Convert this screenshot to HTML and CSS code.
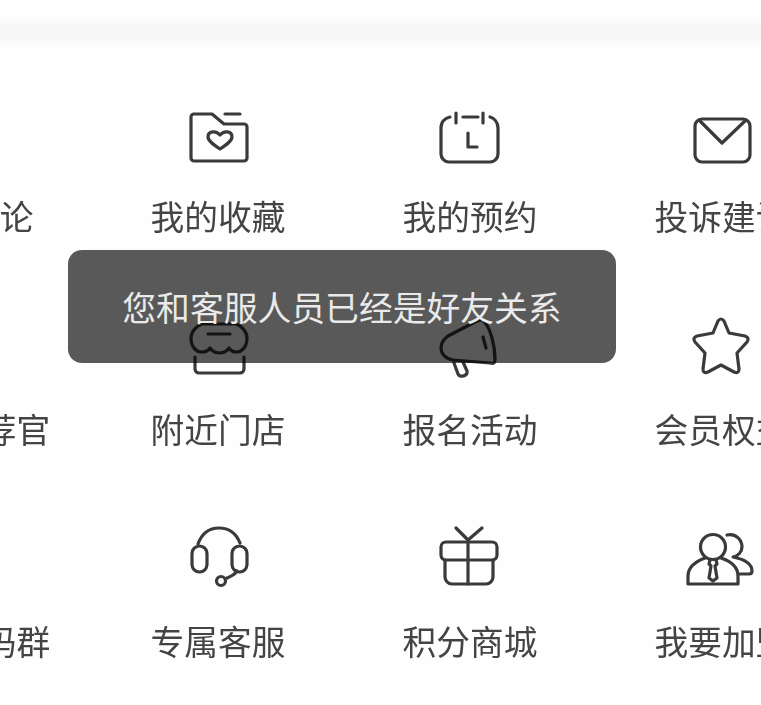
FILE: index.html
```html
<!DOCTYPE html>
<html lang="zh-CN">
<head>
    <meta charset="UTF-8">
    <meta name="viewport" content="width=device-width, initial-scale=1.0">
    <title>个人中心</title>
    <link rel="stylesheet" href="styles.css">
</head>
<body>
    <div class="top-band"></div>

    <div class="menu">
        <div class="row row-1">
            <div class="item">
                <div class="icon"></div>
                <div class="label">我的评论</div>
            </div>
            <div class="item">
                <svg class="icon" viewBox="0 0 64 64">
                    <path d="M5 11a3 3 0 0 1 3-3h18l12 10h20a3 3 0 0 1 3 3v31a3 3 0 0 1-3 3H8a3 3 0 0 1-3-3z"/>
                    <path d="M39 8h15"/>
                    <path d="M34 43c-6-4-12-8-12-12 0-6 8-7 12-2 4-5 12-4 12 2 0 4-6 8-12 12z"/>
                </svg>
                <div class="label">我的收藏</div>
            </div>
            <div class="item">
                <svg class="icon" viewBox="0 0 64 64">
                    <path d="M12 11C7 12 3 16 3 22v26a8 8 0 0 0 8 8h41a8 8 0 0 0 8-8V22c0-6-4-10-8-11"/>
                    <path d="M18 7v10M45 7v10M25 11h15"/>
                    <path d="M30 27v14h9"/>
                </svg>
                <div class="label">我的预约</div>
            </div>
            <div class="item">
                <svg class="icon" viewBox="0 0 64 64">
                    <rect x="5" y="13" width="55" height="43" rx="7"/>
                    <path d="M9 14l23 23 24-23"/>
                </svg>
                <div class="label">投诉建议</div>
            </div>
        </div>

        <div class="row row-2">
            <div class="item">
                <div class="icon"></div>
                <div class="label">我的推荐官</div>
            </div>
            <div class="item">
                <svg class="icon" viewBox="0 0 64 64">
                    <path d="M16 7H50C56 9 61 15 61 21C61 30 56 35 50 35C47 35 45 34 43 31C41 34 38 36 33.5 36C29 36 26 34 24 31C22 34 20 35 16 35C10 35 5 30 5 21C5 15 10 9 16 7z"/>
                    <path d="M22 17h22"/>
                    <path d="M9 40v12a4 4 0 0 0 4 4h41a4 4 0 0 0 4-4V40"/>
                </svg>
                <div class="label">附近门店</div>
            </div>
            <div class="item">
                <svg class="icon" viewBox="0 0 64 64">
                    <path d="M44 3C52 8 57 28 57 43c0 3-2 4-5 3L15 43C8 42 3 37 3 31c0-5 3-9 7-12L39 4c2-1 3-1 5-1z"/>
                    <path d="M45 20l3 11"/>
                    <path d="M16 46l4 11c2 4 10 2 9-3l-4-9"/>
                </svg>
                <div class="label">报名活动</div>
            </div>
            <div class="item">
                <svg class="icon" viewBox="0 0 64 64">
                    <path d="M28 4q3-4 6 0L39 16 55 19q5 2 2 6L47 36 49 52q0 5-5 3L31 48 18 55q-5 2-5-3L15 36 5 25q-3-4 2-6L23 16z"/>
                </svg>
                <div class="label">会员权益</div>
            </div>
        </div>

        <div class="row row-3">
            <div class="item">
                <div class="icon"></div>
                <div class="label">加入扫码群</div>
            </div>
            <div class="item">
                <svg class="icon" viewBox="0 0 64 64">
                    <path d="M12 18C16 7 24 2 33 2s17 5 21 15"/>
                    <rect x="6" y="20" width="15" height="26" rx="7.5"/>
                    <rect x="46" y="20" width="15" height="26" rx="7.5"/>
                    <path d="M51 45c-2 4-6 5-10 7"/>
                    <circle cx="35" cy="55" r="4.5"/>
                </svg>
                <div class="label">专属客服</div>
            </div>
            <div class="item">
                <svg class="icon" viewBox="0 0 64 64">
                    <path d="M18 2l12 12L44 2"/>
                    <rect x="3" y="16" width="56" height="18" rx="5"/>
                    <path d="M7 34v17a7 7 0 0 0 7 7h34a7 7 0 0 0 7-7V34"/>
                    <path d="M30 16v42"/>
                </svg>
                <div class="label">积分商城</div>
            </div>
            <div class="item">
                <svg class="icon icon-wide" viewBox="0 0 64 64">
                    <circle cx="23" cy="21" r="12.5"/>
                    <path d="M15 32C7 35-2 40-2 50v8h50v-8c0-10-8-15-17-18"/>
                    <path d="M20 34l-1 4 2 2-2 12 4 3 4-3-2-12 2-2-1-4"/>
                    <path d="M37 9c9-2 15 5 15 12 0 5-4 9-9 10 10 2 19 6 19 14 0 2-1 3-3 3h-9"/>
                </svg>
                <div class="label">我要加盟</div>
            </div>
        </div>
    </div>

    <div class="toast">您和客服人员已经是好友关系</div>
</body>
</html>
```

FILE: styles.css
```css
html, body {
    height: 100%;
}
body {
    margin: 0;
    background: #fefefe;
    color: #444;
    font-family: "Noto Sans CJK SC", "Noto Sans", sans-serif;
    overflow: hidden;
    position: relative;
}
.top-band {
    height: 16px;
    margin-top: 24px;
    background: #f7f7f7;
    box-shadow: 0 0 6px 2px #f7f7f7;
}
.menu {
    margin-top: 66px;
    margin-left: -160px;
    width: 1008px;
    filter: blur(0.4px);
}
.row {
    display: grid;
    grid-template-columns: repeat(4, 252px);
}
.row-2 {
    margin-top: 81px;
}
.row-3 {
    margin-top: 77px;
}
.item {
    display: flex;
    flex-direction: column;
    align-items: center;
}
.icon {
    display: block;
    width: 64px;
    height: 64px;
    fill: none;
    stroke: #3a3a3a;
    stroke-width: 3.2;
    stroke-linecap: round;
    stroke-linejoin: round;
    overflow: visible;
}
.label {
    font-size: 33.7px;
    line-height: 40px;
    white-space: nowrap;
}
.row-1 .label {
    margin-top: 26px;
}
.row-2 .label {
    margin-top: 28px;
}
.row-3 .label {
    margin-top: 31px;
}
/* Toast */
.toast {
    position: absolute;
    top: 250px;
    left: 68px;
    width: 548px;
    height: 113px;
    display: flex;
    justify-content: center;
    align-items: center;
    background: rgba(0, 0, 0, 0.65);
    border-radius: 14px;
    color: #eaeaea;
    font-size: 33.8px;
    white-space: nowrap;
}
```
